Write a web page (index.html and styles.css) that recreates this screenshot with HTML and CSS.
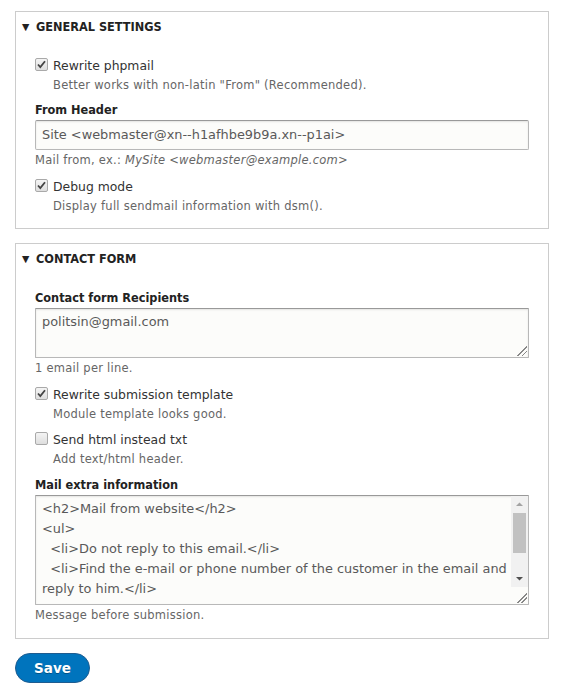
FILE: index.html
```html
<!DOCTYPE html>
<html>
<head>
<meta charset="utf-8">
<link rel="stylesheet" href="styles.css">
</head>
<body>
<div class="page">
  <section class="fs">
    <div class="summary"><span class="tri">&#9660;</span>GENERAL SETTINGS</div>
    <div class="body first">
      <div class="check">
        <span class="box checked"><svg width="13" height="13" viewBox="0 0 13 13"><path d="M3 6.5 L5.3 9 L10 3.2" fill="none" stroke="#444" stroke-width="1.8"/></svg></span>
        <span class="clabel">Rewrite phpmail</span>
      </div>
      <div class="desc indent">Better works with non-latin "From" (Recommended).</div>
      <div class="label gap6">From Header</div>
      <div class="input">Site &lt;webmaster@xn--h1afhbe9b9a.xn--p1ai&gt;</div>
      <div class="desc after-field">Mail from, ex.: <em>MySite &lt;webmaster@example.com&gt;</em></div>
      <div class="check gap8">
        <span class="box checked"><svg width="13" height="13" viewBox="0 0 13 13"><path d="M3 6.5 L5.3 9 L10 3.2" fill="none" stroke="#444" stroke-width="1.8"/></svg></span>
        <span class="clabel">Debug mode</span>
      </div>
      <div class="desc indent">Display full sendmail information with dsm().</div>
    </div>
  </section>

  <section class="fs">
    <div class="summary"><span class="tri">&#9660;</span>CONTACT FORM</div>
    <div class="body">
      <div class="label">Contact form Recipients</div>
      <div class="textarea small">
        <div class="ta-text">politsin@gmail.com</div>
        <span class="grip"></span>
      </div>
      <div class="desc after-field">1 email per line.</div>
      <div class="check gap8">
        <span class="box checked"><svg width="13" height="13" viewBox="0 0 13 13"><path d="M3 6.5 L5.3 9 L10 3.2" fill="none" stroke="#444" stroke-width="1.8"/></svg></span>
        <span class="clabel">Rewrite submission template</span>
      </div>
      <div class="desc indent">Module template looks good.</div>
      <div class="check gap7">
        <span class="box"></span>
        <span class="clabel">Send html instead txt</span>
      </div>
      <div class="desc indent">Add text/html header.</div>
      <div class="label gap7">Mail extra information</div>
      <div class="textarea big">
        <div class="ta-text pre">&lt;h2&gt;Mail from website&lt;/h2&gt;
&lt;ul&gt;
  &lt;li&gt;Do not reply to this email.&lt;/li&gt;
  &lt;li&gt;Find the e-mail or phone number of the customer in the email and reply to him.&lt;/li&gt;</div>
        <div class="sb">
          <div class="sb-btn"><svg width="17" height="17" viewBox="0 0 17 17"><path d="M5 10 L8.5 6.5 L12 10 Z" fill="#a3a3a3"/></svg></div>
          <div class="sb-track"><div class="sb-thumb"></div></div>
          <div class="sb-btn"><svg width="17" height="17" viewBox="0 0 17 17"><path d="M5 7 L8.5 10.5 L12 7 Z" fill="#505050"/></svg></div>
          <div class="sb-corner"><span class="grip"></span></div>
        </div>
      </div>
      <div class="desc after-field">Message before submission.</div>
    </div>
  </section>

  <div class="actions"><span class="btn">Save</span></div>
</div>
</body>
</html>
```

FILE: styles.css
```css
html, body {
  margin: 0;
  padding: 0;
  background: #fff;
}
body {
  font-family: "DejaVu Sans", "Lucida Grande", sans-serif;
  color: #333;
  font-size: 12.4px;
}
.page {
  padding: 11px 16px 0 15px;
  width: 534px;
  display: flex;
  flex-direction: column;
  gap: 14px;
}
.fs {
  border: 1px solid #ccc;
  background: #fff;
}
.summary {
  height: 28px;
  line-height: 28px;
  padding-top: 1px;
  box-sizing: border-box;
  padding-left: 6px;
  font-family: "DejaVu Sans Condensed", "DejaVu Sans", sans-serif;
  font-weight: bold;
  font-size: 12.6px;
  color: #222;
  text-transform: uppercase;
}
.tri {
  font-family: "DejaVu Sans", sans-serif;
  font-size: 9.5px;
  display: inline-block;
  width: 14px;
  vertical-align: 1px;
}
.body {
  padding: 16px 19px 14px 19px;
  display: flex;
  flex-direction: column;
}
.body.first {
  padding-bottom: 13px;
}
.check {
  height: 20px;
  display: flex;
  align-items: flex-start;
  gap: 5px;
}
.box {
  width: 13px;
  height: 13px;
  margin-top: 2px;
  box-sizing: border-box;
  border: 1px solid #a9a9a9;
  border-radius: 2px;
  background: linear-gradient(#f4f4f4, #dedede);
  display: block;
  position: relative;
  flex: none;
}
.box svg {
  position: absolute;
  left: -1px;
  top: -1px;
}
.clabel {
  color: #333;
  line-height: 20px;
}
.desc {
  font-size: 11.5px;
  line-height: 18px;
  color: #666;
  letter-spacing: 0.25px;
}
.after-field {
  margin-top: 1px;
}
.desc em {
  font-style: italic;
}
.indent {
  padding-left: 18px;
}
.label {
  font-family: "DejaVu Sans Condensed", "DejaVu Sans", sans-serif;
  font-weight: bold;
  font-size: 12.6px;
  line-height: 20px;
  color: #222;
}
.gap6 { margin-top: 6px; }
.gap7 { margin-top: 7px; }
.gap8 { margin-top: 8px; }
.input {
  height: 30px;
  box-sizing: border-box;
  border: 1px solid #b8b8b8;
  border-top-color: #999;
  border-radius: 2px;
  background: #fcfcfa;
  box-shadow: inset 0 1px 2px rgba(0,0,0,0.1);
  padding: 0 6px;
  line-height: 28px;
  color: #595959;
  font-size: 12.9px;
  width: 494px;
}
.textarea {
  box-sizing: border-box;
  border: 1px solid #b8b8b8;
  border-top-color: #999;
  border-radius: 1px;
  background: #fcfcfa;
  box-shadow: inset 0 1px 2px rgba(0,0,0,0.1);
  color: #595959;
  font-size: 12.9px;
  width: 494px;
  position: relative;
  display: flex;
  overflow: hidden;
}
.textarea.small { height: 50px; }
.textarea.big { height: 110px; }
.ta-text {
  flex: 1;
  padding: 3px 1px 3px 6px;
  line-height: 20px;
}
.pre {
  white-space: pre-wrap;
}
.grip {
  position: absolute;
  right: 1px;
  bottom: 1px;
  width: 10px;
  height: 10px;
  background: linear-gradient(135deg, transparent 0 48%, #888 48% 56%, transparent 56% 70%, #888 70% 78%, transparent 78%);
}
.sb {
  width: 17px;
  display: flex;
  flex-direction: column;
  background: #f1f1f1;
  flex: none;
}
.sb-btn {
  height: 17px;
}
.sb-btn svg { display: block; }
.sb-track {
  flex: 1;
  padding: 0 2px;
}
.sb-thumb {
  height: 40px;
  background: #c1c1c1;
}
.sb-corner {
  height: 17px;
  background: #fcfcfa;
  position: relative;
}
.actions {
  display: flex;
}
.btn {
  width: 75px;
  height: 30px;
  box-sizing: border-box;
  border-radius: 15px;
  background: #0074bd;
  border: 1px solid #1e5c90;
  color: #fff;
  font-weight: bold;
  font-size: 13.5px;
  line-height: 28px;
  text-align: center;
  text-shadow: 0 1px 0 rgba(0,0,0,0.3);
}
```
